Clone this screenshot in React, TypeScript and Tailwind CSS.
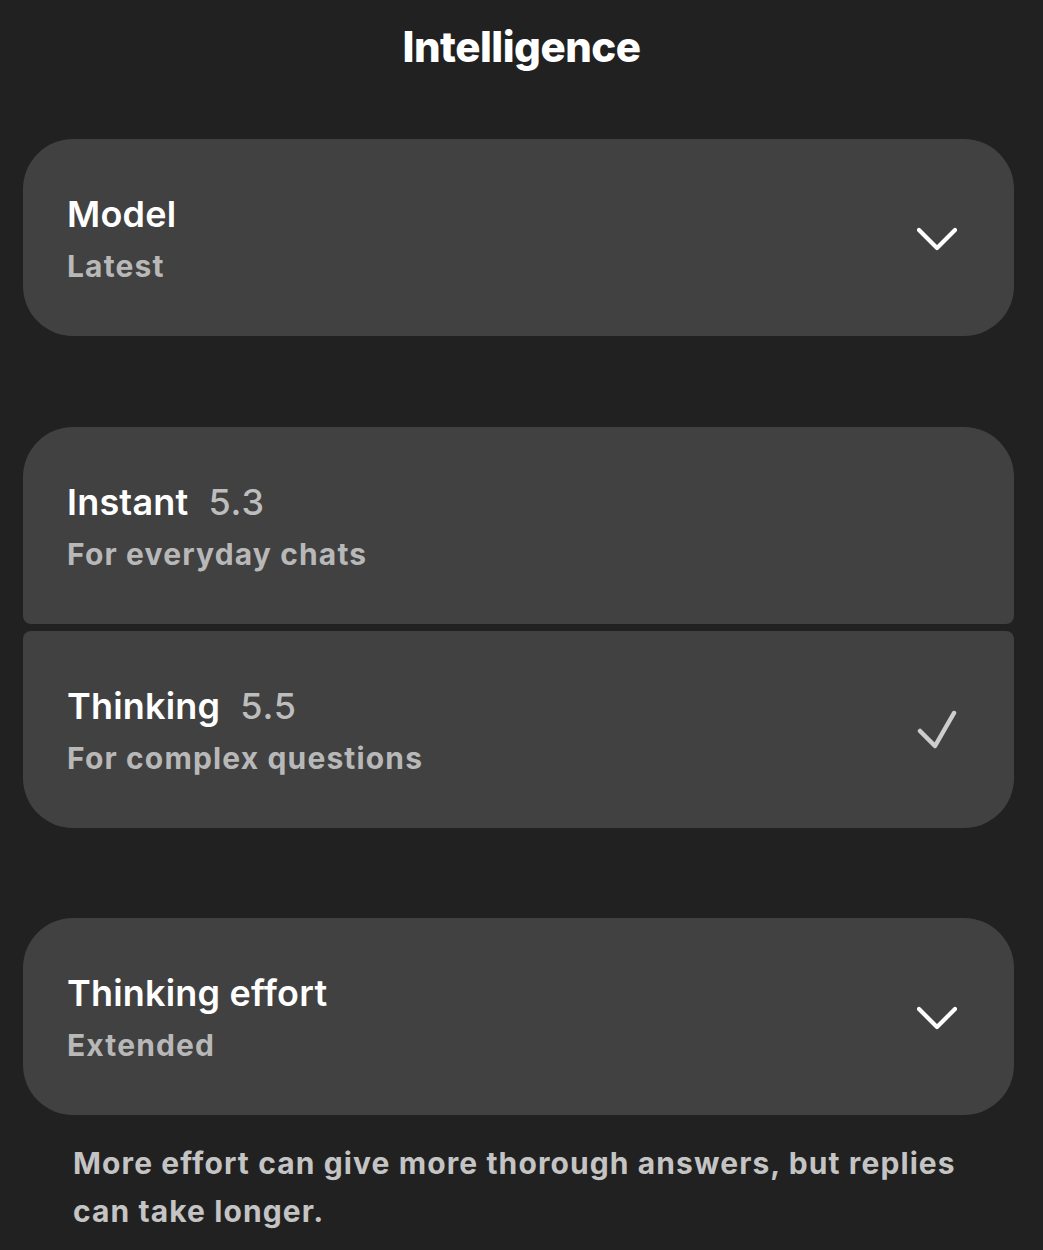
function Chevron() {
  return (
    <svg width="40" height="26" viewBox="0 0 40 26" className="mt-[4px]">
      <polyline
        points="2,3 20,21 38,3"
        fill="none"
        stroke="#ffffff"
        strokeWidth="4.2"
        strokeLinecap="round"
        strokeLinejoin="round"
      />
    </svg>
  )
}

function Tick() {
  return (
    <svg width="40" height="40" viewBox="0 0 40 40" className="-ml-[2px]">
      <polyline
        points="3,21 18,36 37,3"
        fill="none"
        stroke="#cdcdcd"
        strokeWidth="4.5"
        strokeLinecap="round"
        strokeLinejoin="round"
      />
    </svg>
  )
}

function Row({
  title,
  tag,
  sub,
  icon,
  shape,
}: {
  title: string
  tag?: string
  sub: string
  icon?: 'chevron' | 'check'
  shape: string
}) {
  return (
    <div className={`h-[197px] bg-[#414141] flex items-center justify-between pl-[44px] pr-[57px] ${shape}`}>
      <div className="flex flex-col mt-[6px]">
        <div className="flex items-baseline gap-[20px] text-[36px] leading-[52px] font-semibold text-white tracking-[0.2px]">
          <span>{title}</span>
          {tag && <span className="font-medium text-[#bdbdbd] tracking-[0.8px]">{tag}</span>}
        </div>
        <div className="text-[30px] leading-[53px] font-bold text-[#b8b8b8] tracking-[1.15px]">
          {sub}
        </div>
      </div>
      {icon === 'chevron' && <Chevron />}
      {icon === 'check' && <Tick />}
    </div>
  )
}

export default function App() {
  return (
    <div className="w-[1043px] h-[1250px] bg-[#212121] pl-[23px] pr-[29px] font-['Inter',sans-serif] overflow-hidden">
      {/* Header */}
      <h1 className="text-center text-[42px] font-extrabold text-white leading-[94px] tracking-[-0.5px] pl-[6px]">
        Intelligence
      </h1>

      {/* Model */}
      <div className="mt-[45px]">
        <Row title="Model" sub="Latest" icon="chevron" shape="rounded-[50px]" />
      </div>

      {/* Versions */}
      <div className="mt-[91px] flex flex-col gap-[7px]">
        <Row
          title="Instant"
          tag="5.3"
          sub="For everyday chats"
          shape="rounded-t-[50px] rounded-b-[8px]"
        />
        <Row
          title="Thinking"
          tag="5.5"
          sub="For complex questions"
          icon="check"
          shape="rounded-t-[8px] rounded-b-[50px]"
        />
      </div>

      {/* Effort */}
      <div className="mt-[90px]">
        <Row title="Thinking effort" sub="Extended" icon="chevron" shape="rounded-[50px]" />
      </div>

      <p className="mt-[24px] pl-[50px] pr-[20px] text-[30px] leading-[48px] font-bold text-[#c4c4c4] tracking-[1.1px]">
        More effort can give more thorough answers, but replies can take longer.
      </p>
    </div>
  )
}
